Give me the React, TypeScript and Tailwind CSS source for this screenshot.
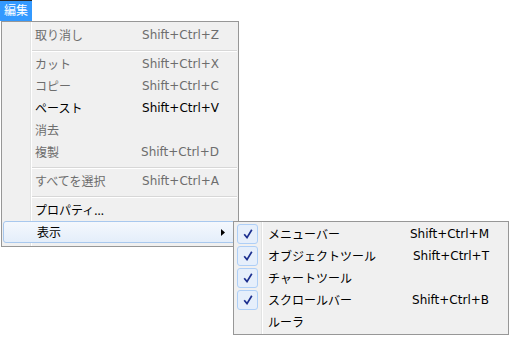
import React from "react";

const font = { fontFamily: '"Noto Sans", "Noto Sans CJK JP", sans-serif' };
const scFont = { fontFamily: '"DejaVu Sans", "Noto Sans", sans-serif' };

type Item =
  | { sep: true }
  | { label: string; sc?: string; disabled?: boolean; sub?: boolean; hl?: boolean };

const mainItems: Item[] = [
  { label: "取り消し", sc: "Shift+Ctrl+Z", disabled: true },
  { sep: true },
  { label: "カット", sc: "Shift+Ctrl+X", disabled: true },
  { label: "コピー", sc: "Shift+Ctrl+C", disabled: true },
  { label: "ペースト", sc: "Shift+Ctrl+V" },
  { label: "消去", disabled: true },
  { label: "複製", sc: "Shift+Ctrl+D", disabled: true },
  { sep: true },
  { label: "すべてを選択", sc: "Shift+Ctrl+A", disabled: true },
  { sep: true },
  { label: "プロパティ..." },
  { label: "表示", sub: true, hl: true },
];

const subItems = [
  { label: "メニューバー", sc: "Shift+Ctrl+M", checked: true },
  { label: "オブジェクトツール", sc: "Shift+Ctrl+T", checked: true },
  { label: "チャートツール", checked: true },
  { label: "スクロールバー", sc: "Shift+Ctrl+B", checked: true },
  { label: "ルーラ", checked: false },
];

function Check() {
  return (
    <svg width="10" height="10" viewBox="0 0 10 10">
      <path d="M1.2 5.2 L4 8.6 L8.8 0.8" fill="none" stroke="#1c2f8f" strokeWidth="1.7" strokeLinejoin="miter" />
    </svg>
  );
}

export default function App() {
  return (
    <div className="relative w-[509px] h-[337px] bg-white text-[12px] leading-none overflow-hidden" style={font}>
      <div className="w-[32px] h-[21px] bg-[#3399ff] border-t border-[#2a2a2a] text-white flex items-center justify-center">
        編集
      </div>
      <div className="ml-[1px] w-[238px] border border-[#979797] bg-[#f0f0f0] pt-[2px] pb-[3px] bg-[linear-gradient(to_right,transparent_28px,#e2e3e3_28px,#e2e3e3_29px,#ffffff_29px,#ffffff_30px,transparent_30px)]">
        {mainItems.map((it, i) =>
          "sep" in it ? (
            <div key={i} className="h-[7px] pl-[30px] pr-[1px] pt-[4px]">
              <div className="h-px bg-[#d7d7d7]" />
              <div className="h-px bg-white" />
            </div>
          ) : (
            <div
              key={i}
              className={
                "relative h-[22px] flex items-center pl-[33px] pr-[19px] " +
                (it.hl ? "mx-[1px] pl-[32px] border border-[#a8c8ee] rounded-[3px] bg-[linear-gradient(#f4f8fd,#e4eefa)]" : "")
              }
            >
              <span className={"flex-1 pt-[1px] " + (it.disabled ? "text-[#6d6d6d]" : "text-black")}>{it.label}</span>
              {it.sc && (
                <span style={scFont} className={it.disabled ? "text-[#6d6d6d]" : "text-black"}>
                  {it.sc}
                </span>
              )}
              {it.sub && (
                <svg width="4" height="7" viewBox="0 0 4 7" className="mr-[-8px]">
                  <polygon points="0,0 4,3.5 0,7" fill="#000" />
                </svg>
              )}
            </div>
          )
        )}
      </div>

      <div className="absolute left-[233px] top-[221px] w-[276px] border border-[#979797] bg-[#f0f0f0] py-[1px] bg-[linear-gradient(to_right,transparent_27px,#e2e3e3_27px,#e2e3e3_28px,#ffffff_28px,#ffffff_29px,transparent_29px)]">
        {subItems.map((it, i) => (
          <div key={i} className="h-[22px] flex items-center pl-[3px] pr-[19px]">
            <div className="w-[21px] h-[20px] mr-[10px] flex items-center justify-center">
              {it.checked && (
                <div className="w-[21px] h-[20px] rounded-[3px] border border-[#aecff7] bg-[#e6effb] flex items-center justify-center">
                  <Check />
                </div>
              )}
            </div>
            <span className="flex-1 pt-[1px] text-black">{it.label}</span>
            {it.sc && (
              <span style={scFont} className="text-black">
                {it.sc}
              </span>
            )}
          </div>
        ))}
      </div>
    </div>
  );
}
